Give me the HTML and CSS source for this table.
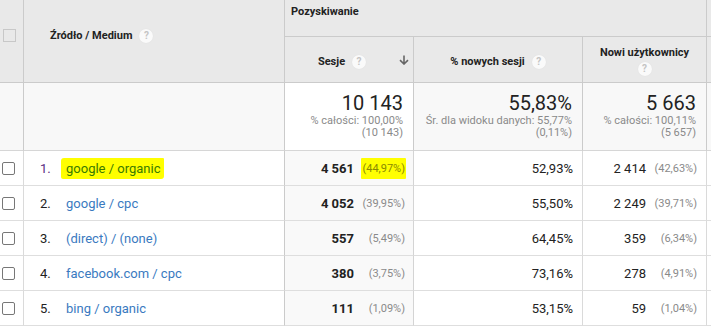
FILE: index.html
```html
<!DOCTYPE html>
<html lang="pl">
<head>
<meta charset="utf-8">
<link rel="stylesheet" href="styles.css">
</head>
<body>
<div class="table">
  <div class="h h-check"><span class="cb cb-dis"></span></div>
  <div class="h h-dim"><span class="ht">Źródło / Medium</span><span class="help">?</span></div>
  <div class="h h-group">Pozyskiwanie</div>
  <div class="h h-extra"></div>

  <div class="h h-metric h-sort">
    <div class="lbl"><span class="ht">Sesje</span><span class="help">?</span></div>
    <svg class="arrow" width="10" height="10" viewBox="0 0 10 10"><path d="M5 0.5V9M1 5.2L5 9L9 5.2" fill="none" stroke="#666" stroke-width="1.6"/></svg>
  </div>
  <div class="h h-metric"><div class="lbl"><span class="ht">% nowych sesji</span><span class="help">?</span></div></div>
  <div class="h h-metric h-two"><span class="ht">Nowi użytkownicy</span><span class="help">?</span></div>
  <div class="h h-extra2"></div>

  <div class="t t-g"></div>
  <div class="t t-g"></div>
  <div class="t t-w"><div class="big">10 143</div><div class="sub">% całości: 100,00%</div><div class="sub">(10 143)</div></div>
  <div class="t t-g"><div class="big">55,83%</div><div class="sub">Śr. dla widoku danych: 55,77%</div><div class="sub">(0,11%)</div></div>
  <div class="t t-g"><div class="big">5 663</div><div class="sub">% całości: 100,11%</div><div class="sub">(5 657)</div></div>
  <div class="t t-g t-last"></div>

  <div class="c c-check"><span class="cb"></span></div>
  <div class="c c-dim"><span class="num num-v">1.</span><span class="link mark">google / organic</span></div>
  <div class="c c-sort"><span class="val">4 561</span><span class="pct"><span class="mark mark-p">(44,97%)</span></span></div>
  <div class="c c-r">52,93%</div>
  <div class="c c-r"><span class="val2">2 414</span><span class="pct">(42,63%)</span></div>
  <div class="c c-last"></div>

  <div class="c c-check"><span class="cb"></span></div>
  <div class="c c-dim"><span class="num">2.</span><span class="link">google / cpc</span></div>
  <div class="c c-sort"><span class="val">4 052</span><span class="pct">(39,95%)</span></div>
  <div class="c c-r">55,50%</div>
  <div class="c c-r"><span class="val2">2 249</span><span class="pct">(39,71%)</span></div>
  <div class="c c-last"></div>

  <div class="c c-check"><span class="cb"></span></div>
  <div class="c c-dim"><span class="num">3.</span><span class="link">(direct) / (none)</span></div>
  <div class="c c-sort"><span class="val">557</span><span class="pct">(5,49%)</span></div>
  <div class="c c-r">64,45%</div>
  <div class="c c-r"><span class="val2">359</span><span class="pct">(6,34%)</span></div>
  <div class="c c-last"></div>

  <div class="c c-check"><span class="cb"></span></div>
  <div class="c c-dim"><span class="num">4.</span><span class="link">facebook.com / cpc</span></div>
  <div class="c c-sort"><span class="val">380</span><span class="pct">(3,75%)</span></div>
  <div class="c c-r">73,16%</div>
  <div class="c c-r"><span class="val2">278</span><span class="pct">(4,91%)</span></div>
  <div class="c c-last"></div>

  <div class="c c-check"><span class="cb"></span></div>
  <div class="c c-dim"><span class="num">5.</span><span class="link">bing / organic</span></div>
  <div class="c c-sort"><span class="val">111</span><span class="pct">(1,09%)</span></div>
  <div class="c c-r">53,15%</div>
  <div class="c c-r"><span class="val2">59</span><span class="pct">(1,04%)</span></div>
  <div class="c c-last"></div>
</div>
</body>
</html>
```

FILE: styles.css
```css
* { box-sizing: border-box; }
html, body { margin: 0; padding: 0; background: #fff; }
body {
  font-family: Roboto, "Liberation Sans", Arial, sans-serif;
  color: #222;
  width: 711px;
  height: 327px;
  overflow: hidden;
}
.table {
  display: grid;
  grid-template-columns: 24px 261px 129px 169px 124px 1fr;
  grid-template-rows: 37px 46px 68px repeat(5, 35px);
}
.h {
  background: #e9e9e9;
  border-right: 1px solid #cbcbcb;
  border-bottom: 1px solid #cbcbcb;
  font-size: 11px;
  font-weight: 700;
  color: #222;
}
.h-check { grid-row: 1 / 3; padding: 29px 0 0 3px; }
.h-dim { grid-row: 1 / 3; padding: 28px 0 0 26px; line-height: 16px; }
.h-group { grid-column: 3 / 6; padding: 5px 0 0 6px; line-height: 14px; }
.h-extra { grid-column: 6; }
.h-extra2 { grid-column: 6; }
.ht { vertical-align: middle; }
.help {
  display: inline-block;
  width: 14px;
  height: 14px;
  border-radius: 50%;
  background: #fafafa;
  box-shadow: 0 0 1px #d8d8d8;
  color: #c4c4c4;
  font-size: 10px;
  font-weight: 700;
  line-height: 14px;
  text-align: center;
  margin-left: 7px;
  vertical-align: middle;
}
.h-metric {
  display: flex;
  align-items: center;
  justify-content: center;
  padding-top: 5px;
}
.h-metric .lbl { flex: 1; text-align: center; line-height: 18px; }
.h-sort { padding-right: 4px; }
.arrow { display: block; margin-bottom: 4px; }
.h-two {
  flex-direction: column;
  padding-top: 0;
  line-height: 18px;
  text-align: center;
}
.h-two .help { margin: 0; display: block; }

.cb {
  display: block;
  width: 13px;
  height: 13px;
  border: 1px solid #777;
  border-radius: 2px;
  background: #fff;
}
.cb-dis { border-color: #c8c8c8; background: transparent; border-radius: 0; }

.t {
  border-right: 1px solid #cbcbcb;
  border-bottom: 1px solid #d6d6d6;
  text-align: right;
  padding: 10px 10px 0 0;
  white-space: nowrap;
}
.t-g { background: #f8f8f8; }
.t-w { background: #fff; }
.big { font-size: 20px; line-height: 21px; color: #222; margin-bottom: 1px; }
.sub { font-size: 11px; line-height: 12px; color: #8a8a8a; }

.c {
  border-right: 1px solid #dadada;
  border-bottom: 1px solid #dedede;
  font-size: 13px;
  display: flex;
  align-items: center;
  white-space: nowrap;
}
.c-check { padding-left: 2px; }
.c-dim { padding-left: 16px; border-right-color: #cbcbcb; }
.num { width: 26px; color: #222; }
.num-v { color: #5a2d82; }
.link { color: #3a7abf; }
.mark { background: #ffff00; padding: 3px 3px 3px 5px; margin-left: -5px; color: #3a7a00; border-radius: 3px 1px 3px 2px; }
.c-sort {
  background: #f9f9f9;
  justify-content: flex-end;
  padding-right: 8px;
  border-right-color: #d4d4d4;
}
.val { font-weight: 700; color: #222; }
.val2 { color: #222; }
.pct { width: 51px; text-align: right; font-size: 11px; color: #8a8a8a; }
.mark-p { margin: 0 -1px 0 0; padding: 4px 1px 4px 1px; color: #8a8a00; border-radius: 1px; }
.c-r { justify-content: flex-end; padding-right: 9px; }
.c-last { border-right: none; }
```
